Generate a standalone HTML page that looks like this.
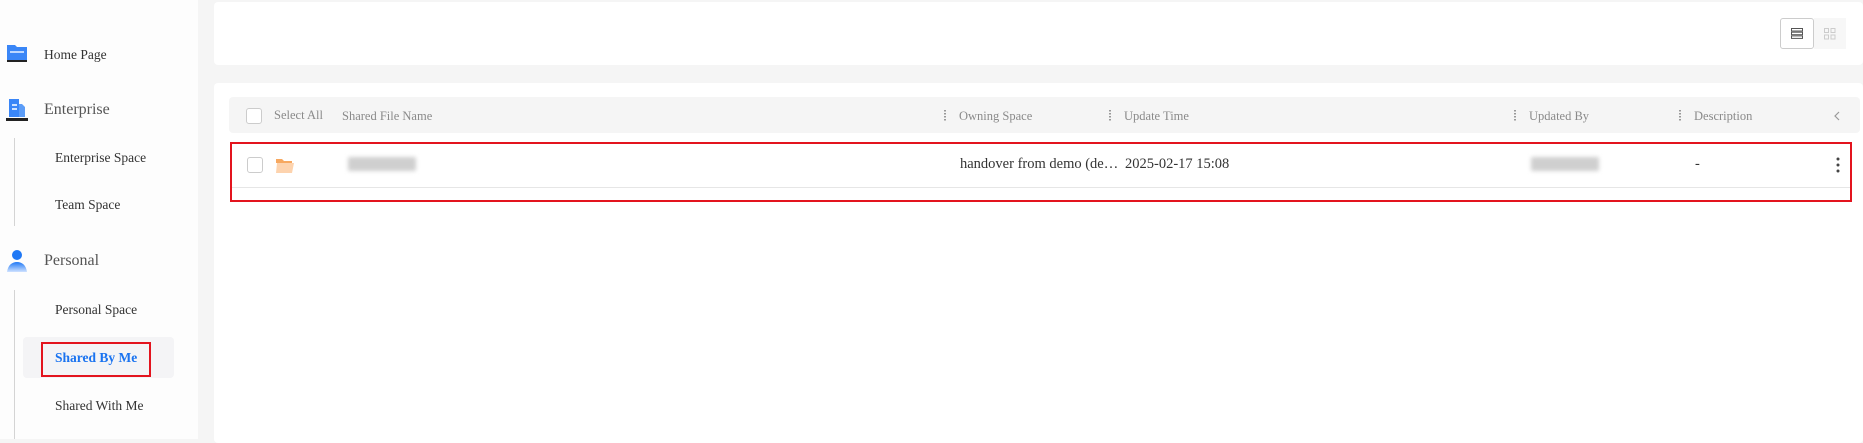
<!DOCTYPE html>
<html><head><meta charset="utf-8"><style>
*{margin:0;padding:0;box-sizing:border-box}
body{width:1863px;height:439px;background:#f5f5f5;font-family:"Liberation Serif","Noto Serif CJK SC",serif;position:relative;overflow:hidden;color:#333}
.a{position:absolute;white-space:nowrap}
.side{left:0;top:0;width:198px;height:439px;background:#fdfdfd}
.nav{font-size:13.5px;color:#333;line-height:16px}
.grp{font-size:16px;color:#555;line-height:18px}
.vl{width:1px;background:#d4d4d4}
.card{background:#fff;border-radius:4px}
.hd{font-size:12.5px;color:#8a8a8a;line-height:15px}
.dv{width:2px;height:12px;background-image:linear-gradient(#999 50%,transparent 50%);background-size:2px 3px}
.cb{width:16px;height:16px;border:1px solid #ccc;border-radius:3px;background:#fff}
.blur{background:#cfcfcf;filter:blur(2px);border-radius:2px}
.rt{font-size:14.5px;color:#333}
</style></head><body>
<div class="a side"></div>
<svg class="a" style="left:6px;top:44px" width="22" height="19" viewBox="0 0 22 19"><path d="M1 1h8l2 2h10v13H1z" fill="#3a86f7"/><rect x="4" y="7" width="14" height="2" fill="#bcd7ff"/><rect x="1" y="16" width="20" height="2" fill="#222"/></svg>
<div class="a nav" style="left:44px;top:47px">Home Page</div>
<svg class="a" style="left:6px;top:98px" width="22" height="23" viewBox="0 0 22 23"><rect x="3" y="1" width="10" height="18" fill="#3a86f7"/><path d="M13 6h3l3 3v10h-6z" fill="#5c9df8"/><rect x="6" y="6" width="5" height="2" fill="#cfe2ff"/><rect x="6" y="10" width="5" height="2" fill="#cfe2ff"/><rect x="0" y="20" width="22" height="3" fill="#222"/></svg>
<div class="a grp" style="left:44px;top:101px">Enterprise</div>
<div class="a vl" style="left:14px;top:138px;height:88px"></div>
<div class="a nav" style="left:55px;top:150px">Enterprise Space</div>
<div class="a nav" style="left:55px;top:197px">Team Space</div>
<svg class="a" style="left:6px;top:250px" width="22" height="22" viewBox="0 0 22 22"><defs><linearGradient id="g" x1="0" y1="0" x2="0" y2="1"><stop offset="0" stop-color="#1f78f5"/><stop offset="1" stop-color="#cfe2ff"/></linearGradient></defs><circle cx="11" cy="5" r="5" fill="#1f78f5"/><path d="M1 22c1-7 5-10 10-10s9 3 10 10z" fill="url(#g)"/></svg>
<div class="a grp" style="left:44px;top:252px">Personal</div>
<div class="a vl" style="left:14px;top:290px;height:149px"></div>
<div class="a nav" style="left:55px;top:302px">Personal Space</div>
<div class="a" style="left:23px;top:337px;width:151px;height:41px;background:#f4f4f6;border-radius:4px"></div>
<div class="a" style="left:41px;top:342px;width:110px;height:35px;border:2px solid #e3141e"></div>
<div class="a nav" style="left:55px;top:350px;color:#1a73f0;font-weight:bold">Shared By Me</div>
<div class="a nav" style="left:55px;top:398px">Shared With Me</div>

<div class="a card" style="left:214px;top:2px;width:1649px;height:63px"></div>
<div class="a" style="left:1780px;top:18px;width:34px;height:31px;border:1px solid #ccc;border-radius:3px;background:#fff"></div>
<svg class="a" style="left:1791px;top:28px" width="12" height="11" viewBox="0 0 12 11"><rect x="0.5" y="0.5" width="11" height="2.5" fill="none" stroke="#555"/><rect x="0.5" y="4.2" width="11" height="2.5" fill="none" stroke="#555"/><rect x="0.5" y="7.9" width="11" height="2.5" fill="none" stroke="#555"/></svg>
<div class="a" style="left:1814px;top:18px;width:32px;height:31px;background:#f7f7f7"></div>
<svg class="a" style="left:1824px;top:28px" width="12" height="12" viewBox="0 0 12 12"><g fill="none" stroke="#ccc"><rect x="0.5" y="0.5" width="4" height="4"/><rect x="7" y="0.5" width="4" height="4"/><rect x="0.5" y="7" width="4" height="4"/><rect x="7" y="7" width="4" height="4"/></g></svg>

<div class="a card" style="left:214px;top:83px;width:1649px;height:360px"></div>
<div class="a" style="left:229px;top:97px;width:1631px;height:36px;background:#f5f5f5;border-radius:4px"></div>
<div class="a cb" style="left:246px;top:108px"></div>
<div class="a hd" style="left:274px;top:108px">Select All</div>
<div class="a hd" style="left:342px;top:109px">Shared File Name</div>
<div class="a dv" style="left:944px;top:110px"></div>
<div class="a hd" style="left:959px;top:109px">Owning Space</div>
<div class="a dv" style="left:1109px;top:110px"></div>
<div class="a hd" style="left:1124px;top:109px">Update Time</div>
<div class="a dv" style="left:1514px;top:110px"></div>
<div class="a hd" style="left:1529px;top:109px">Updated By</div>
<div class="a dv" style="left:1679px;top:110px"></div>
<div class="a hd" style="left:1694px;top:109px">Description</div>
<svg class="a" style="left:1834px;top:111px" width="6" height="10" viewBox="0 0 6 10"><path d="M5 1L1 5l4 4" fill="none" stroke="#999" stroke-width="1.2"/></svg>

<div class="a" style="left:232px;top:187px;width:1618px;height:1px;background:#e6e6e6"></div>
<div class="a cb" style="left:247px;top:157px"></div>
<svg class="a" style="left:276px;top:159px" width="18" height="14" viewBox="0 0 18 14"><path d="M0 0h6l2 2h8v2H0z" fill="#f7a860"/><path d="M1 4h17l-2 10H0z" fill="#fdd3ae"/></svg>
<div class="a blur" style="left:348px;top:157px;width:68px;height:14px"></div>
<div class="a rt" style="left:960px;top:156px">handover from demo (de…</div>
<div class="a rt" style="left:1125px;top:156px">2025-02-17 15:08</div>
<div class="a blur" style="left:1531px;top:157px;width:68px;height:14px"></div>
<div class="a rt" style="left:1695px;top:156px">-</div>
<svg class="a" style="left:1836px;top:157px" width="4" height="16" viewBox="0 0 4 16"><circle cx="2" cy="2" r="1.5" fill="#444"/><circle cx="2" cy="8" r="1.5" fill="#444"/><circle cx="2" cy="14" r="1.5" fill="#444"/></svg>
<div class="a" style="left:230px;top:142px;width:1622px;height:60px;border:2px solid #e3141e"></div>
</body></html>
